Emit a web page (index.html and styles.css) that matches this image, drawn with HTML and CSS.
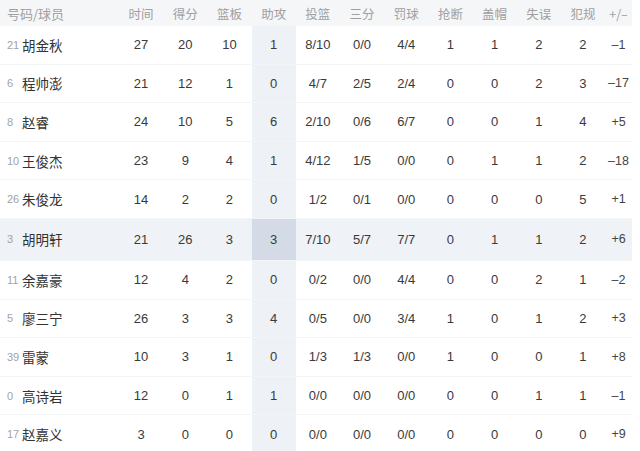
FILE: index.html
```html
<!DOCTYPE html>
<html lang="zh">
<head>
<meta charset="utf-8">
<link rel="stylesheet" href="styles.css">
</head>
<body>
<div class="table">
  <div class="row head">
    <div class="c name">号码/球员</div><div class="c">时间</div><div class="c">得分</div><div class="c">篮板</div><div class="c">助攻</div><div class="c">投篮</div><div class="c">三分</div><div class="c">罚球</div><div class="c">抢断</div><div class="c">盖帽</div><div class="c">失误</div><div class="c">犯规</div><div class="c pm">+/–</div>
  </div>
  <div class="row"><div class="c name"><span class="no">21</span>胡金秋</div><div class="c">27</div><div class="c">20</div><div class="c">10</div><div class="c ast">1</div><div class="c">8/10</div><div class="c">0/0</div><div class="c">4/4</div><div class="c">1</div><div class="c">1</div><div class="c">2</div><div class="c">2</div><div class="c pm">–1</div></div>
  <div class="row"><div class="c name"><span class="no">6</span>程帅澎</div><div class="c">21</div><div class="c">12</div><div class="c">1</div><div class="c ast">0</div><div class="c">4/7</div><div class="c">2/5</div><div class="c">2/4</div><div class="c">0</div><div class="c">0</div><div class="c">2</div><div class="c">3</div><div class="c pm">–17</div></div>
  <div class="row"><div class="c name"><span class="no">8</span>赵睿</div><div class="c">24</div><div class="c">10</div><div class="c">5</div><div class="c ast">6</div><div class="c">2/10</div><div class="c">0/6</div><div class="c">6/7</div><div class="c">0</div><div class="c">0</div><div class="c">1</div><div class="c">4</div><div class="c pm">+5</div></div>
  <div class="row"><div class="c name"><span class="no">10</span>王俊杰</div><div class="c">23</div><div class="c">9</div><div class="c">4</div><div class="c ast">1</div><div class="c">4/12</div><div class="c">1/5</div><div class="c">0/0</div><div class="c">0</div><div class="c">1</div><div class="c">1</div><div class="c">2</div><div class="c pm">–18</div></div>
  <div class="row"><div class="c name"><span class="no">26</span>朱俊龙</div><div class="c">14</div><div class="c">2</div><div class="c">2</div><div class="c ast">0</div><div class="c">1/2</div><div class="c">0/1</div><div class="c">0/0</div><div class="c">0</div><div class="c">0</div><div class="c">0</div><div class="c">5</div><div class="c pm">+1</div></div>
  <div class="row hl"><div class="c name"><span class="no">3</span>胡明轩</div><div class="c">21</div><div class="c">26</div><div class="c">3</div><div class="c ast">3</div><div class="c">7/10</div><div class="c">5/7</div><div class="c">7/7</div><div class="c">0</div><div class="c">1</div><div class="c">1</div><div class="c">2</div><div class="c pm">+6</div></div>
  <div class="row"><div class="c name"><span class="no">11</span>余嘉豪</div><div class="c">12</div><div class="c">4</div><div class="c">2</div><div class="c ast">0</div><div class="c">0/2</div><div class="c">0/0</div><div class="c">4/4</div><div class="c">0</div><div class="c">0</div><div class="c">2</div><div class="c">1</div><div class="c pm">–2</div></div>
  <div class="row"><div class="c name"><span class="no">5</span>廖三宁</div><div class="c">26</div><div class="c">3</div><div class="c">3</div><div class="c ast">4</div><div class="c">0/5</div><div class="c">0/0</div><div class="c">3/4</div><div class="c">1</div><div class="c">0</div><div class="c">1</div><div class="c">2</div><div class="c pm">+3</div></div>
  <div class="row"><div class="c name"><span class="no">39</span>雷蒙</div><div class="c">10</div><div class="c">3</div><div class="c">1</div><div class="c ast">0</div><div class="c">1/3</div><div class="c">1/3</div><div class="c">0/0</div><div class="c">1</div><div class="c">0</div><div class="c">0</div><div class="c">1</div><div class="c pm">+8</div></div>
  <div class="row"><div class="c name"><span class="no">0</span>高诗岩</div><div class="c">12</div><div class="c">0</div><div class="c">1</div><div class="c ast">1</div><div class="c">0/0</div><div class="c">0/0</div><div class="c">0/0</div><div class="c">0</div><div class="c">0</div><div class="c">1</div><div class="c">1</div><div class="c pm">–1</div></div>
  <div class="row"><div class="c name"><span class="no">17</span>赵嘉义</div><div class="c">3</div><div class="c">0</div><div class="c">0</div><div class="c ast">0</div><div class="c">0/0</div><div class="c">0/0</div><div class="c">0/0</div><div class="c">0</div><div class="c">0</div><div class="c">0</div><div class="c">0</div><div class="c pm">+9</div></div>
</div>
</body>
</html>
```
FILE: styles.css
```css
html, body {
  margin: 0;
  padding: 0;
  background: #ffffff;
}
body {
  font-family: "Liberation Sans", "Noto Sans CJK SC", sans-serif;
  color: #3a3a3a;
  font-size: 13px;
  overflow: hidden;
}
.table {
  width: 632px;
}
.row {
  display: grid;
  grid-template-columns: 119px repeat(11, 44.2px) 1fr;
  height: 38.6px;
  align-items: stretch;
  border-bottom: 1px solid #f3f4f6;
  box-sizing: border-box;
}
.row.head {
  height: 26px;
  background: #f5f6f8;
  color: #a0a0a0;
  font-family: "Noto Sans CJK SC", sans-serif;
  font-size: 12.5px;
  border-bottom: none;
}
.c {
  display: flex;
  align-items: center;
  justify-content: center;
}
.c.name {
  justify-content: flex-start;
  padding-left: 7px;
  font-family: "Noto Sans CJK SC", sans-serif;
  font-size: 13px;
}
.row:not(.head) .c.name {
  font-size: 13.5px;
  color: #333;
}
.no {
  display: inline-block;
  width: 15px;
  font-family: "Liberation Sans", sans-serif;
  font-size: 11px;
  color: #a3a3a3;
}
.c.ast {
  background: #eef1f6;
}
.row.hl {
  height: 42px;
  background: #eff2f7;
}
.row.hl .c.ast {
  background: #d4dbe7;
}
.c.pm {
  color: #444;
  font-size: 12.5px;
}
.row.head .c.pm {
  color: #a0a0a0;
}
```
